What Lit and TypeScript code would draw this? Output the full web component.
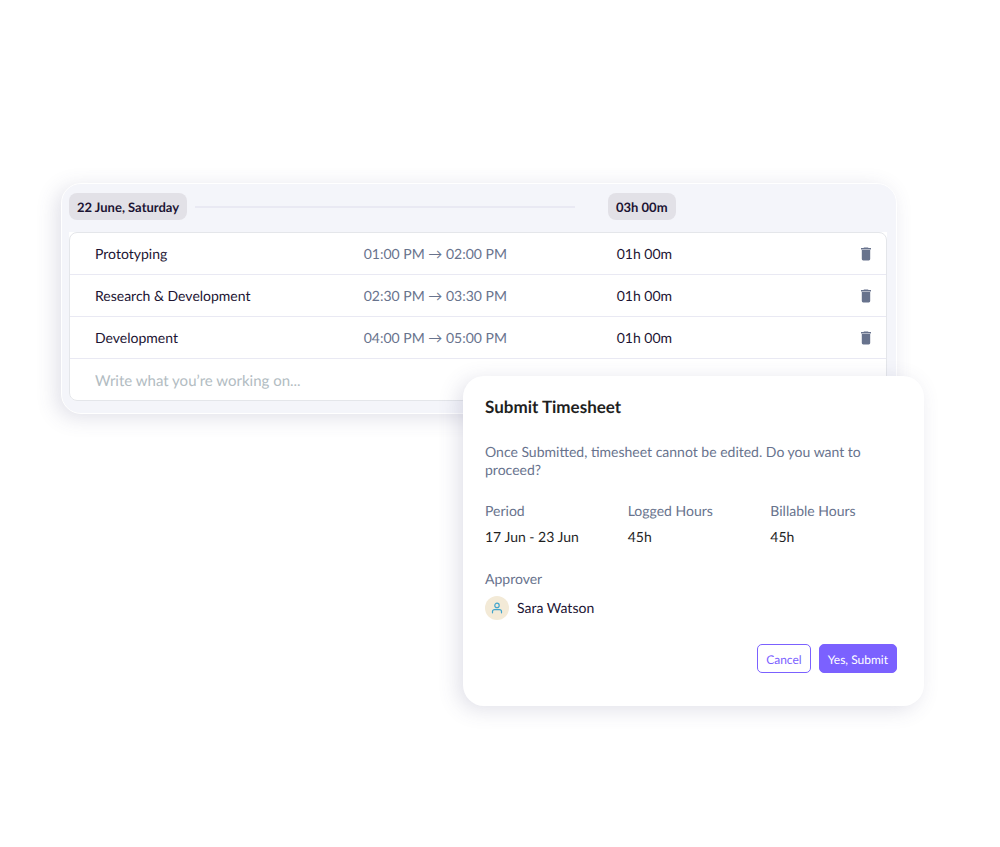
import { LitElement, html, css } from "lit";
import { customElement, property, state } from "lit/decorators.js";

const fontStack = css`Lato, "Liberation Sans", sans-serif`;

interface Entry {
  id: number;
  task: string;
  from: string;
  to: string;
  duration: string;
}

@customElement("timesheet-day")
class TimesheetDay extends LitElement {
  @property() day = "";
  @property() total = "";
  @property({ attribute: false }) entries: Entry[] = [];

  static styles = css`
    :host {
      display: block;
      padding: 9px 9px 12px 7px;
      border: 1px solid #ffffff;
      border-radius: 20px;
      background: #f4f5fa;
      box-shadow: -5px 4px 20px rgba(75, 80, 125, 0.17);
      font-family: ${fontStack};
      text-rendering: geometricPrecision;
      color: #1c1433;
    }
    .header {
      display: grid;
      grid-template-columns: 539fr 279fr;
      align-items: center;
      margin-bottom: 12px;
    }
    .lead {
      display: flex;
      align-items: center;
      gap: 8px;
      padding-right: 33px;
    }
    .rule {
      flex: 1;
      height: 2px;
      background: #e9e9f3;
    }
    .pill {
      justify-self: start;
      padding: 5px 8px 3px;
      border-radius: 8px;
      background: #e2e1e7;
      font-size: 13px;
      font-weight: 700;
      line-height: 19px;
      white-space: nowrap;
    }
    .backing {
      border-radius: 0 0 8px 8px;
      background: #ffffff;
    }
    .frame {
      border: 1px solid #e4e6ea;
      border-radius: 8px;
    }
    table {
      width: 100%;
      border-collapse: collapse;
      table-layout: fixed;
      font-size: 14px;
      line-height: 18px;
    }
    .c-task { width: 36%; }
    .c-time { width: 31%; }
    .c-action { width: 40px; }
    td {
      height: 41px;
      padding: 0;
      border-bottom: 1px solid #e9e9f3;
      text-align: left;
    }
    .last td { border-bottom: 0; }
    .task, .new { padding-left: 25px; }
    .time { color: #68738d; }
    .trash {
      display: block;
      padding: 4px;
      border: 0;
      background: none;
      color: #68738d;
      cursor: pointer;
      margin-left: 10px;
    }
    .trash svg { display: block; }
    input {
      display: block;
      width: 100%;
      padding: 2px 0 0;
      border: 0;
      outline: 0;
      background: none;
      color: inherit;
      font-family: inherit;
      font-size: 15px;
      line-height: 20px;
      text-rendering: inherit;
    }
    input::placeholder { color: #b2bcc2; opacity: 1; }
  `;

  private remove(id: number) {
    this.dispatchEvent(new CustomEvent("remove-entry", { detail: id }));
  }

  render() {
    return html`
      <div class="header">
        <div class="lead">
          <span class="pill">${this.day}</span>
          <span class="rule"></span>
        </div>
        <span class="pill">${this.total}</span>
      </div>
      <div class="backing">
        <div class="frame">
          <table>
            <colgroup>
              <col class="c-task" />
              <col class="c-time" />
              <col />
              <col class="c-action" />
            </colgroup>
            <tbody>
              ${this.entries.map(
                (e) => html`
                  <tr>
                    <td class="task">${e.task}</td>
                    <td class="time">${e.from} → ${e.to}</td>
                    <td>${e.duration}</td>
                    <td>
                      <button class="trash" aria-label="Delete ${e.task}" @click=${() => this.remove(e.id)}>
                        <svg width="12" height="14" viewBox="0 0 12 14" fill="currentColor" aria-hidden="true">
                          <path d="M4 0.5h4l0.5 0.5H11v1.4H1V1h2.5zM1.8 3h8.4v9a1.4 1.4 0 0 1-1.4 1.4H3.2A1.4 1.4 0 0 1 1.8 12z" />
                        </svg>
                      </button>
                    </td>
                  </tr>
                `
              )}
              <tr class="last">
                <td class="new" colspan="4">
                  <input type="text" aria-label="New entry" placeholder="Write what you’re working on..." />
                </td>
              </tr>
            </tbody>
          </table>
        </div>
      </div>
    `;
  }
}

@customElement("submit-dialog")
class SubmitDialog extends LitElement {
  static styles = css`
    :host {
      display: block;
      box-sizing: border-box;
      padding: 21px 27px 33px 22px;
      border-radius: 21px;
      background: #ffffff;
      box-shadow: -5px 4px 20px rgba(75, 80, 125, 0.17);
      font-family: ${fontStack};
      font-size: 14px;
      line-height: 18px;
      text-rendering: geometricPrecision;
      color: #1f1f1f;
    }
    h2 {
      margin: 0 0 26px;
      font-size: 17px;
      font-weight: 700;
      line-height: 20px;
    }
    p {
      max-width: 400px;
      margin: 0 0 23px;
      color: #68738d;
    }
    dl {
      display: grid;
      grid-template-columns: repeat(3, 1fr);
      gap: 24px 16px;
      margin: 0 0 24px;
    }
    dt {
      margin-bottom: 8px;
      color: #68738d;
    }
    dd { margin: 0; }
    .person {
      display: flex;
      align-items: center;
      gap: 8px;
      color: #1c1433;
    }
    .avatar {
      display: grid;
      place-items: center;
      width: 24px;
      height: 24px;
      border-radius: 50%;
      background: #f3ead7;
      color: #41a5cd;
    }
    .actions {
      display: flex;
      justify-content: flex-end;
      gap: 8px;
    }
    button {
      padding: 6px 8px 4px;
      border: 1px solid #7b61ff;
      border-radius: 5px;
      background: #ffffff;
      color: #7b61ff;
      font-family: inherit;
      font-size: 12px;
      line-height: 17px;
      text-rendering: inherit;
      cursor: pointer;
    }
    .primary {
      background: #7b61ff;
      color: #ffffff;
    }
  `;

  private close(result: string) {
    this.dispatchEvent(new CustomEvent("decide", { detail: result }));
  }

  render() {
    return html`
      <h2>Submit Timesheet</h2>
      <p>Once Submitted, timesheet cannot be edited. Do you want to proceed?</p>
      <dl>
        <div><dt>Period</dt><dd>17 Jun - 23 Jun</dd></div>
        <div><dt>Logged Hours</dt><dd>45h</dd></div>
        <div><dt>Billable Hours</dt><dd>45h</dd></div>
        <div>
          <dt>Approver</dt>
          <dd class="person">
            <span class="avatar">
              <svg width="12" height="12" viewBox="0 0 12 12" fill="none" stroke="currentColor" stroke-width="1.2" stroke-linecap="round" aria-hidden="true">
                <circle cx="6" cy="3.4" r="2.2" />
                <path d="M1.5 10.8V9.6a2 2 0 0 1 2-2h5a2 2 0 0 1 2 2v1.2" />
              </svg>
            </span>
            Sara Watson
          </dd>
        </div>
      </dl>
      <div class="actions">
        <button type="button" @click=${() => this.close("cancel")}>Cancel</button>
        <button type="button" class="primary" @click=${() => this.close("submit")}>Yes, Submit</button>
      </div>
    `;
  }
}

@customElement("app-root")
class AppRoot extends LitElement {
  @state() private open = true;
  @state() private entries: Entry[] = [
    { id: 1, task: "Prototyping", from: "01:00 PM", to: "02:00 PM", duration: "01h 00m" },
    { id: 2, task: "Research & Development", from: "02:30 PM", to: "03:30 PM", duration: "01h 00m" },
    { id: 3, task: "Development", from: "04:00 PM", to: "05:00 PM", duration: "01h 00m" },
  ];

  static styles = css`
    :host {
      display: block;
      box-sizing: border-box;
      min-height: 100vh;
      padding: 183px 76px 80px 61px;
      background: #ffffff;
    }
    .stage { position: relative; }
    timesheet-day { margin-right: 27px; }
    submit-dialog {
      position: absolute;
      top: 193px;
      right: 0;
      width: 461px;
      max-width: 100%;
    }
  `;

  render() {
    return html`
      <div class="stage">
        <timesheet-day
          day="22 June, Saturday"
          total="03h 00m"
          .entries=${this.entries}
          @remove-entry=${(e: CustomEvent<number>) => {
            this.entries = this.entries.filter((x) => x.id !== e.detail);
          }}
        ></timesheet-day>
        ${this.open
          ? html`<submit-dialog role="dialog" aria-label="Submit Timesheet" @decide=${() => (this.open = false)}></submit-dialog>`
          : ""}
      </div>
    `;
  }
}
